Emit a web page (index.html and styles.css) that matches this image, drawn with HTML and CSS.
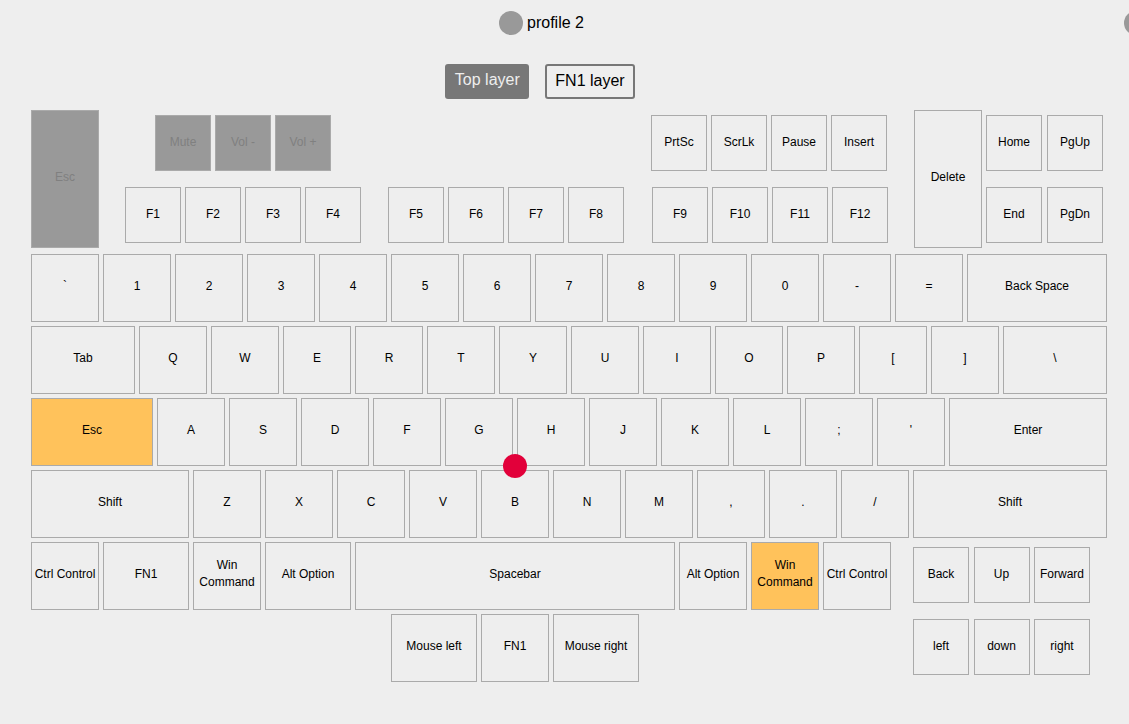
FILE: index.html
```html
<!DOCTYPE html>
<html>
<head>
<meta charset="utf-8">
<link rel="stylesheet" href="styles.css">
</head>
<body>
<div class="page">
  <header class="profile-bar">
    <div class="profile"><span class="avatar"></span><span class="profile-name">profile 2</span></div>
    <span class="avatar avatar-edge"></span>
  </header>

  <div class="layers">
    <button class="layer layer-active">Top layer</button>
    <button class="layer">FN1 layer</button>
  </div>

  <div class="keyboard">
    <div class="top-section">
      <div class="key key-tall key-muted">Esc</div>
      <div class="fblock">
        <div class="frow">
          <div class="key key-s key-muted media-first">Mute</div>
          <div class="key key-s key-muted">Vol -</div>
          <div class="key key-s key-muted">Vol +</div>
          <div class="key key-s sys-first">PrtSc</div>
          <div class="key key-s">ScrLk</div>
          <div class="key key-s">Pause</div>
          <div class="key key-s">Insert</div>
        </div>
        <div class="frow frow-f">
          <div class="key key-s">F1</div>
          <div class="key key-s">F2</div>
          <div class="key key-s">F3</div>
          <div class="key key-s">F4</div>
          <div class="key key-s group-gap">F5</div>
          <div class="key key-s">F6</div>
          <div class="key key-s">F7</div>
          <div class="key key-s">F8</div>
          <div class="key key-s group-gap2">F9</div>
          <div class="key key-s">F10</div>
          <div class="key key-s">F11</div>
          <div class="key key-s">F12</div>
        </div>
      </div>
      <div class="key key-tall delete-key">Delete</div>
      <div class="nav-top">
        <div class="key key-s">Home</div>
        <div class="key key-s">PgUp</div>
        <div class="key key-s">End</div>
        <div class="key key-s">PgDn</div>
      </div>
    </div>

    <div class="row">
      <div class="key">`</div>
      <div class="key">1</div>
      <div class="key">2</div>
      <div class="key">3</div>
      <div class="key">4</div>
      <div class="key">5</div>
      <div class="key">6</div>
      <div class="key">7</div>
      <div class="key">8</div>
      <div class="key">9</div>
      <div class="key">0</div>
      <div class="key">-</div>
      <div class="key">=</div>
      <div class="key w140">Back Space</div>
    </div>

    <div class="row">
      <div class="key w104">Tab</div>
      <div class="key">Q</div>
      <div class="key">W</div>
      <div class="key">E</div>
      <div class="key">R</div>
      <div class="key">T</div>
      <div class="key">Y</div>
      <div class="key">U</div>
      <div class="key">I</div>
      <div class="key">O</div>
      <div class="key">P</div>
      <div class="key">[</div>
      <div class="key">]</div>
      <div class="key w104">\</div>
    </div>

    <div class="row">
      <div class="key w122 key-hot">Esc</div>
      <div class="key">A</div>
      <div class="key">S</div>
      <div class="key">D</div>
      <div class="key">F</div>
      <div class="key">G</div>
      <div class="key">H</div>
      <div class="key">J</div>
      <div class="key">K</div>
      <div class="key">L</div>
      <div class="key">;</div>
      <div class="key">'</div>
      <div class="key w158">Enter</div>
    </div>

    <div class="row">
      <div class="key w158">Shift</div>
      <div class="key">Z</div>
      <div class="key">X</div>
      <div class="key">C</div>
      <div class="key">V</div>
      <div class="key">B</div>
      <div class="key">N</div>
      <div class="key">M</div>
      <div class="key">,</div>
      <div class="key">.</div>
      <div class="key">/</div>
      <div class="key w194">Shift</div>
    </div>

    <div class="bottom">
      <div class="bottom-main">
        <div class="row">
          <div class="key">Ctrl Control</div>
          <div class="key w86">FN1</div>
          <div class="key">Win Command</div>
          <div class="key w86">Alt Option</div>
          <div class="key w320">Spacebar</div>
          <div class="key">Alt Option</div>
          <div class="key key-hot">Win Command</div>
          <div class="key">Ctrl Control</div>
        </div>
        <div class="row thumb-row">
          <div class="key w86">Mouse left</div>
          <div class="key">FN1</div>
          <div class="key w86">Mouse right</div>
        </div>
      </div>
      <div class="nav-bottom">
        <div class="key key-s">Back</div>
        <div class="key key-s">Up</div>
        <div class="key key-s">Forward</div>
        <div class="key key-s">left</div>
        <div class="key key-s">down</div>
        <div class="key key-s">right</div>
      </div>
    </div>

    <span class="dot"></span>
  </div>
</div>
</body>
</html>
```

FILE: styles.css
```css
* { box-sizing: border-box; }

html, body {
  margin: 0;
  padding: 0;
  background: #eeeeee;
  overflow: hidden;
}

body {
  font-family: "Liberation Sans", Arial, sans-serif;
  color: #000;
  width: 1129px;
  height: 724px;
}

.page {
  position: relative;
  width: 1129px;
  height: 724px;
  overflow: hidden;
}

.profile-bar {
  width: 1083px;
  padding-top: 11px;
  display: flex;
  justify-content: center;
}

.profile {
  display: flex;
  align-items: center;
  gap: 4px;
  height: 24px;
}

.avatar {
  display: block;
  width: 24px;
  height: 24px;
  border-radius: 50%;
  background: #999999;
}

.avatar-edge {
  position: absolute;
  left: 1124px;
  top: 11px;
}

.profile-name {
  font-size: 16px;
  line-height: 24px;
}

.layers {
  width: 1080px;
  margin-top: 29px;
  display: flex;
  justify-content: center;
  gap: 16px;
}

.layer {
  font-family: "Liberation Sans", Arial, sans-serif;
  font-size: 16px;
  height: 35px;
  padding: 0 8px 2px;
  border: 2px solid #777777;
  border-radius: 3px;
  background: #eeeeee;
  color: #000;
  white-space: nowrap;
}

.layer-active {
  background: #777777;
  color: #eeeeee;
  border: none;
  width: 84px;
  padding: 0 0 4px;
}

.keyboard {
  position: relative;
  margin-top: 11px;
  padding-left: 31px;
}

.key {
  width: 68px;
  height: 68px;
  flex: none;
  border: 1px solid #aaaaaa;
  background: #eeeeee;
  display: flex;
  align-items: center;
  justify-content: center;
  text-align: center;
  font-size: 12px;
  line-height: 1.4;
  padding: 0 1px 4px;
}

.key-s {
  width: 56px;
  height: 56px;
  padding-bottom: 2px;
}

.key-tall {
  width: 68px;
  height: 138px;
}

.key-muted {
  background: #999999;
  color: #808080;
}

.key-hot {
  background: #ffc25b;
}

.w86 { width: 86px; }
.w104 { width: 104px; }
.w122 { width: 122px; }
.w140 { width: 140px; }
.w158 { width: 158px; }
.w194 { width: 194px; }
.w320 { width: 320px; }

.top-section {
  display: flex;
  align-items: flex-start;
  height: 138px;
  margin-bottom: 6px;
}

.fblock {
  margin-left: 26px;
  padding-top: 5px;
  display: flex;
  flex-direction: column;
  gap: 16px;
}

.frow {
  display: flex;
  gap: 4px;
}

.media-first { margin-left: 30px; }
.sys-first { margin-left: 316px; }
.group-gap { margin-left: 23px; }
.group-gap2 { margin-left: 24px; }

.delete-key {
  margin-left: 26px;
}

.nav-top {
  margin-left: 4px;
  padding-top: 5px;
  display: grid;
  grid-template-columns: 56px 56px;
  column-gap: 5px;
  row-gap: 16px;
}

.row {
  display: flex;
  gap: 4px;
  margin-bottom: 4px;
}

.bottom {
  display: flex;
  align-items: flex-start;
}

.thumb-row {
  margin-left: 360px;
}

.nav-bottom {
  margin-left: 22px;
  margin-top: 5px;
  display: grid;
  grid-template-columns: 56px 56px 56px;
  column-gap: 4.5px;
  row-gap: 16px;
}

.dot {
  position: absolute;
  left: 503px;
  top: 344px;
  width: 24px;
  height: 24px;
  border-radius: 50%;
  background: #e2003a;
}
```
